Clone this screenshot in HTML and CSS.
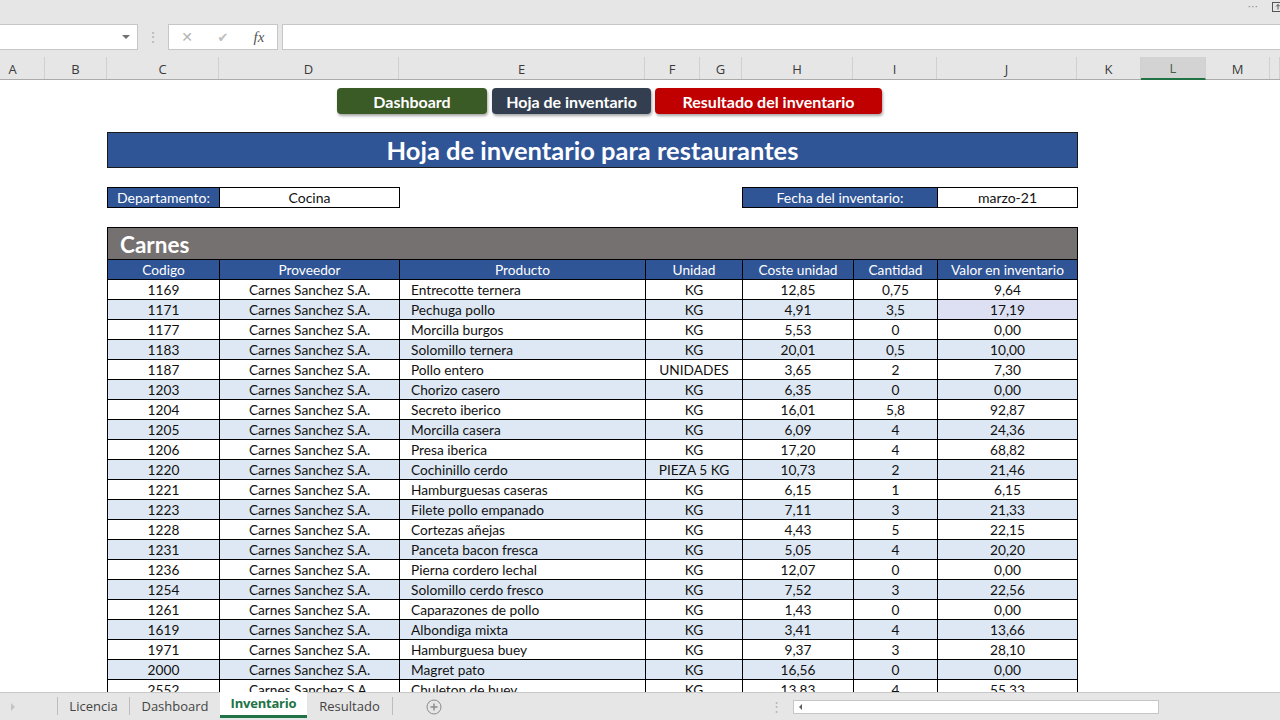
FILE: index.html
```html
<!DOCTYPE html>
<html lang="es">
<head>
<meta charset="utf-8">
<title>Hoja de inventario para restaurantes</title>
<link rel="stylesheet" href="styles.css">
</head>
<body>
<div class="app">
  <div class="topbar">
    <span class="more">···</span>
    <svg class="share" width="12" height="12" viewBox="0 0 12 12"><rect x="0.5" y="1.5" width="11" height="9" fill="none" stroke="#555"/><path d="M6 8.5V3.5M4 5.5l2-2 2 2" fill="none" stroke="#555"/></svg>
  </div>

  <div class="formula-row">
    <div class="namebox"><span class="caret"></span></div>
    <div class="grip">⋮</div>
    <div class="fxbox">
      <span class="fxicon cancel">✕</span>
      <span class="fxicon enter">✔</span>
      <span class="fxicon fx">fx</span>
    </div>
    <div class="formula-input"></div>
  </div>

  <div class="colheads">
    <div class="ch cha">A</div>
    <div class="ch">B</div>
    <div class="ch">C</div>
    <div class="ch">D</div>
    <div class="ch">E</div>
    <div class="ch">F</div>
    <div class="ch">G</div>
    <div class="ch">H</div>
    <div class="ch">I</div>
    <div class="ch">J</div>
    <div class="ch">K</div>
    <div class="ch sel">L</div>
    <div class="ch">M</div>
    <div class="ch"></div>
  </div>

  <div class="sheet">
    <div class="navbtns">
      <span class="navbtn green">Dashboard</span>
      <span class="navbtn slate">Hoja de inventario</span>
      <span class="navbtn red">Resultado del inventario</span>
    </div>

    <div class="title">Hoja de inventario para restaurantes</div>

    <div class="meta">
      <div class="field">
        <div class="flabel dep">Departamento:</div>
        <div class="fvalue dep">Cocina</div>
      </div>
      <div class="field">
        <div class="flabel fec">Fecha del inventario:</div>
        <div class="fvalue fec">marzo-21</div>
      </div>
    </div>

    <div class="section">
      <div class="section-title">Carnes</div>
      <div class="grid">
        <div class="th">Codigo</div><div class="th">Proveedor</div><div class="th">Producto</div><div class="th">Unidad</div><div class="th">Coste unidad</div><div class="th">Cantidad</div><div class="th">Valor en inventario</div>

        <div class="td">1169</div><div class="td">Carnes Sanchez S.A.</div><div class="td prod">Entrecotte ternera</div><div class="td">KG</div><div class="td">12,85</div><div class="td">0,75</div><div class="td">9,64</div>
        <div class="td alt">1171</div><div class="td alt">Carnes Sanchez S.A.</div><div class="td alt prod">Pechuga pollo</div><div class="td alt">KG</div><div class="td alt">4,91</div><div class="td alt">3,5</div><div class="td hl">17,19</div>
        <div class="td">1177</div><div class="td">Carnes Sanchez S.A.</div><div class="td prod">Morcilla burgos</div><div class="td">KG</div><div class="td">5,53</div><div class="td">0</div><div class="td">0,00</div>
        <div class="td alt">1183</div><div class="td alt">Carnes Sanchez S.A.</div><div class="td alt prod">Solomillo ternera</div><div class="td alt">KG</div><div class="td alt">20,01</div><div class="td alt">0,5</div><div class="td alt">10,00</div>
        <div class="td">1187</div><div class="td">Carnes Sanchez S.A.</div><div class="td prod">Pollo entero</div><div class="td">UNIDADES</div><div class="td">3,65</div><div class="td">2</div><div class="td">7,30</div>
        <div class="td alt">1203</div><div class="td alt">Carnes Sanchez S.A.</div><div class="td alt prod">Chorizo casero</div><div class="td alt">KG</div><div class="td alt">6,35</div><div class="td alt">0</div><div class="td alt">0,00</div>
        <div class="td">1204</div><div class="td">Carnes Sanchez S.A.</div><div class="td prod">Secreto iberico</div><div class="td">KG</div><div class="td">16,01</div><div class="td">5,8</div><div class="td">92,87</div>
        <div class="td alt">1205</div><div class="td alt">Carnes Sanchez S.A.</div><div class="td alt prod">Morcilla casera</div><div class="td alt">KG</div><div class="td alt">6,09</div><div class="td alt">4</div><div class="td alt">24,36</div>
        <div class="td">1206</div><div class="td">Carnes Sanchez S.A.</div><div class="td prod">Presa iberica</div><div class="td">KG</div><div class="td">17,20</div><div class="td">4</div><div class="td">68,82</div>
        <div class="td alt">1220</div><div class="td alt">Carnes Sanchez S.A.</div><div class="td alt prod">Cochinillo cerdo</div><div class="td alt">PIEZA 5 KG</div><div class="td alt">10,73</div><div class="td alt">2</div><div class="td alt">21,46</div>
        <div class="td">1221</div><div class="td">Carnes Sanchez S.A.</div><div class="td prod">Hamburguesas caseras</div><div class="td">KG</div><div class="td">6,15</div><div class="td">1</div><div class="td">6,15</div>
        <div class="td alt">1223</div><div class="td alt">Carnes Sanchez S.A.</div><div class="td alt prod">Filete pollo empanado</div><div class="td alt">KG</div><div class="td alt">7,11</div><div class="td alt">3</div><div class="td alt">21,33</div>
        <div class="td">1228</div><div class="td">Carnes Sanchez S.A.</div><div class="td prod">Cortezas añejas</div><div class="td">KG</div><div class="td">4,43</div><div class="td">5</div><div class="td">22,15</div>
        <div class="td alt">1231</div><div class="td alt">Carnes Sanchez S.A.</div><div class="td alt prod">Panceta bacon fresca</div><div class="td alt">KG</div><div class="td alt">5,05</div><div class="td alt">4</div><div class="td alt">20,20</div>
        <div class="td">1236</div><div class="td">Carnes Sanchez S.A.</div><div class="td prod">Pierna cordero lechal</div><div class="td">KG</div><div class="td">12,07</div><div class="td">0</div><div class="td">0,00</div>
        <div class="td alt">1254</div><div class="td alt">Carnes Sanchez S.A.</div><div class="td alt prod">Solomillo cerdo fresco</div><div class="td alt">KG</div><div class="td alt">7,52</div><div class="td alt">3</div><div class="td alt">22,56</div>
        <div class="td">1261</div><div class="td">Carnes Sanchez S.A.</div><div class="td prod">Caparazones de pollo</div><div class="td">KG</div><div class="td">1,43</div><div class="td">0</div><div class="td">0,00</div>
        <div class="td alt">1619</div><div class="td alt">Carnes Sanchez S.A.</div><div class="td alt prod">Albondiga mixta</div><div class="td alt">KG</div><div class="td alt">3,41</div><div class="td alt">4</div><div class="td alt">13,66</div>
        <div class="td">1971</div><div class="td">Carnes Sanchez S.A.</div><div class="td prod">Hamburguesa buey</div><div class="td">KG</div><div class="td">9,37</div><div class="td">3</div><div class="td">28,10</div>
        <div class="td alt">2000</div><div class="td alt">Carnes Sanchez S.A.</div><div class="td alt prod">Magret pato</div><div class="td alt">KG</div><div class="td alt">16,56</div><div class="td alt">0</div><div class="td alt">0,00</div>
        <div class="td">2552</div><div class="td">Carnes Sanchez S.A.</div><div class="td prod">Chuleton de buey</div><div class="td">KG</div><div class="td">13,83</div><div class="td">4</div><div class="td">55,33</div>
      </div>
    </div>
  </div>

  <div class="tabbar">
    <div class="tabnav"><span class="tri"></span></div>
    <div class="tsep"></div>
    <div class="tab t-lic">Licencia</div>
    <div class="tsep"></div>
    <div class="tab t-dash">Dashboard</div>
    <div class="tab active">Inventario</div>
    <div class="tab t-res">Resultado</div>
    <div class="tsep"></div>
    <div class="addtab">
      <svg width="16" height="16" viewBox="0 0 16 16"><circle cx="8" cy="8" r="7" fill="none" stroke="#8a8a8a"/><path d="M8 4.5v7M4.5 8h7" stroke="#8a8a8a" stroke-width="1.4"/></svg>
    </div>
    <div class="tabfill"></div>
    <div class="hgrip">⋮</div>
    <div class="hscroll"><span class="ltri"></span></div>
  </div>
</div>
</body>
</html>
```

FILE: styles.css
```css
* { box-sizing: border-box; }

html, body {
  margin: 0;
  padding: 0;
}

body {
  width: 1280px;
  height: 720px;
  overflow: hidden;
  background: #e6e6e6;
  font-family: Lato, "Open Sans", sans-serif;
  color: #111;
}

.app {
  width: 1280px;
  height: 720px;
  display: flex;
  flex-direction: column;
}

/* ---------- top bar ---------- */
.topbar {
  height: 24px;
  display: flex;
  justify-content: flex-end;
  align-items: flex-start;
  gap: 14px;
  overflow: hidden;
  padding-top: 1px;
}
.topbar .more {
  font-family: "DejaVu Sans", sans-serif;
  font-size: 11px;
  line-height: 12px;
  color: #8c8c8c;
}
.topbar .share {
  margin-right: -4px;
  flex: none;
}

/* ---------- formula row ---------- */
.formula-row {
  height: 26px;
  display: flex;
}
.namebox {
  width: 139px;
  margin-left: -1px;
  background: #fff;
  border: 1px solid #c6c6c6;
  position: relative;
}
.caret {
  position: absolute;
  right: 7px;
  top: 10px;
  width: 0;
  height: 0;
  border-left: 4px solid transparent;
  border-right: 4px solid transparent;
  border-top: 4px solid #707070;
}
.grip {
  width: 30px;
  text-align: center;
  color: #b4b4b4;
  font-size: 14px;
  line-height: 25px;
}
.fxbox {
  width: 110px;
  background: #fff;
  border: 1px solid #c6c6c6;
  display: flex;
  align-items: center;
  gap: 16px;
  padding-left: 8px;
}
.fxicon {
  font-family: "DejaVu Sans", sans-serif;
  color: #b3b3b3;
  font-size: 14px;
  width: 20px;
  text-align: center;
}
.fxicon.enter {
  font-size: 13px;
  color: #bdbdbd;
}
.fxicon.fx {
  font-family: "Liberation Serif", serif;
  font-style: italic;
  color: #555;
  font-size: 15px;
}
.formula-input {
  flex: 1;
  margin-left: 4px;
  margin-right: -2px;
  background: #fff;
  border: 1px solid #c6c6c6;
}

/* ---------- column headers ---------- */
.colheads {
  margin-top: 7px;
  height: 23px;
  display: grid;
  grid-template-columns: 45px 62px 112px 180px 246px 55px 42px 111px 84px 140px 64px 65px 64px 10px;
  border-bottom: 1px solid #ababab;
  font-family: "Open Sans", sans-serif;
  font-size: 13px;
  color: #3a3a3a;
}
.ch {
  border-right: 1px solid #d0d0d0;
  display: flex;
  align-items: center;
  justify-content: center;
  padding-top: 1px;
}
.ch.cha {
  padding-right: 19px;
}
.ch.sel {
  background: #d3d3d3;
  border-bottom: 2px solid #217346;
  color: #3f5f4c;
  margin-bottom: -1px;
}

/* ---------- sheet ---------- */
.sheet {
  height: 612px;
  background: #fff;
  overflow: hidden;
  padding-left: 107px;
}

.navbtns {
  margin-top: 8px;
  padding-left: 230px;
  display: flex;
  gap: 4px;
}
.navbtn {
  height: 26px;
  border-radius: 4px;
  color: #fff;
  font-weight: 700;
  font-size: 16px;
  display: flex;
  align-items: center;
  justify-content: center;
  box-shadow: 1px 2px 3px rgba(0, 0, 0, 0.35);
}
.navbtn.green { width: 150px; background: #3a5a26; margin-right: 1px; }
.navbtn.slate { width: 159px; background: #333f50; }
.navbtn.red   { width: 227px; background: #c00000; }

.title {
  margin-top: 18px;
  width: 971px;
  height: 36px;
  background: #2f5597;
  border: 1px solid #1a1a1a;
  color: #fff;
  font-weight: 700;
  font-size: 25.5px;
  display: flex;
  align-items: center;
  justify-content: center;
}

.meta {
  margin-top: 19px;
  width: 971px;
  display: flex;
  justify-content: space-between;
  font-size: 14px;
}
.field {
  display: flex;
  border: 1px solid #000;
  height: 21px;
}
.flabel {
  background: #2f5597;
  color: #fff;
  border-right: 1px solid #000;
  display: flex;
  align-items: center;
  justify-content: center;
}
.fvalue {
  background: #fff;
  display: flex;
  align-items: center;
  justify-content: center;
}
.flabel.dep { width: 112px; }
.fvalue.dep { width: 179px; }
.flabel.fec { width: 195px; }
.fvalue.fec { width: 139px; }

.section {
  margin-top: 19px;
  width: 971px;
  border-left: 1px solid #000;
  border-top: 1px solid #000;
}
.section-title {
  height: 32px;
  background: #767171;
  border-right: 1px solid #000;
  border-bottom: 1px solid #000;
  color: #fff;
  font-weight: 700;
  font-size: 22.5px;
  padding-left: 12px;
  display: flex;
  align-items: center;
  padding-top: 1px;
}

.grid {
  display: grid;
  grid-template-columns: 112px 180px 246px 97px 111px 84px 140px;
  grid-auto-rows: 20px;
  font-size: 13.7px;
}
.th, .td {
  border-right: 1px solid #000;
  border-bottom: 1px solid #000;
  display: flex;
  align-items: center;
  justify-content: center;
  white-space: nowrap;
  overflow: hidden;
}
.th {
  background: #2f5597;
  color: #fff;
}
.td { background: #fff; color: #111; }
.td.alt { background: #dde8f4; }
.td.hl { background: #dde0f2; }
.td.prod {
  justify-content: flex-start;
  padding-left: 11px;
}

/* ---------- tab bar ---------- */
.tabbar {
  height: 28px;
  display: flex;
  align-items: stretch;
  border-top: 1px solid #c8c8c8;
  font-family: "Open Sans", sans-serif;
  font-size: 13px;
  color: #444;
}
.tabnav {
  width: 57px;
  display: flex;
  align-items: center;
  padding-left: 11px;
}
.tri {
  width: 0;
  height: 0;
  border-top: 4px solid transparent;
  border-bottom: 4px solid transparent;
  border-left: 4px solid #c4c4c4;
}
.tsep {
  width: 1px;
  background: #bdbdbd;
  margin: 4px 0 5px;
}
.tab {
  display: flex;
  align-items: center;
  justify-content: center;
  padding-bottom: 1px;
}
.t-lic { width: 71px; }
.t-dash { width: 90px; }
.t-res { width: 85px; }
.tab.active {
  width: 87px;
  background: #fff;
  color: #217346;
  font-weight: 700;
  letter-spacing: -0.2px;
  border-bottom: 3px solid #217346;
  margin-top: -1px;
  margin-bottom: 2px;
}
.addtab {
  width: 82px;
  display: flex;
  align-items: center;
  justify-content: center;
}
.tabfill {
  width: 284px;
}
.hgrip {
  width: 34px;
  color: #b4b4b4;
  font-size: 13px;
  display: flex;
  align-items: center;
  justify-content: center;
  padding-bottom: 2px;
}
.hscroll {
  width: 366px;
  margin: 7px 0 6px;
  background: #fff;
  border: 1px solid #c6c6c6;
  display: flex;
  align-items: center;
  padding-left: 5px;
}
.ltri {
  width: 0;
  height: 0;
  border-top: 3px solid transparent;
  border-bottom: 3px solid transparent;
  border-right: 3px solid #606060;
}
```
